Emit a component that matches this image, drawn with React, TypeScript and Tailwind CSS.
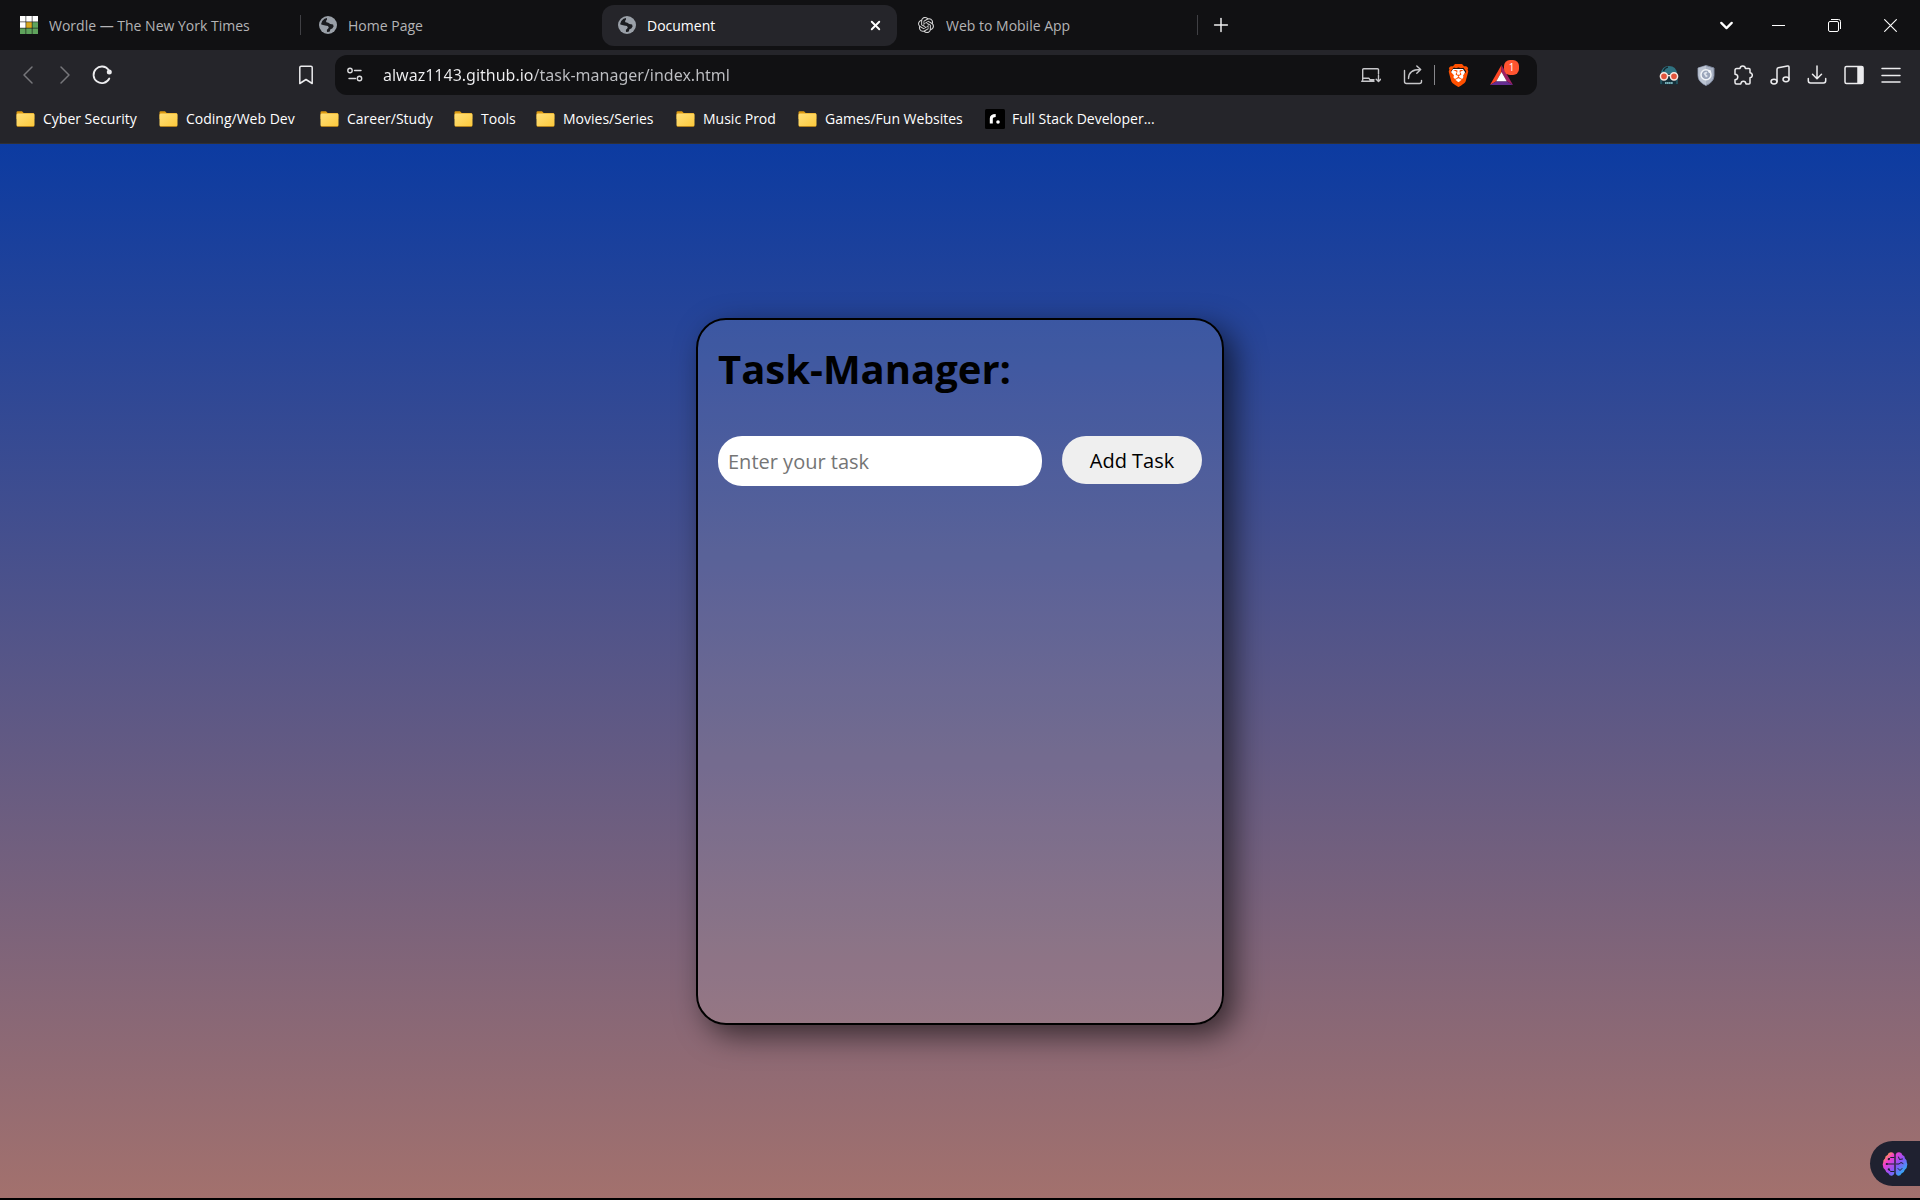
import React from "react";
import { SiBrave, SiOpenai } from "react-icons/si";
import { X, Plus, ChevronDown } from "lucide-react";

function WordleIcon() {
  const cells = [
    "#ffffff", "#ffffff", "#ffffff",
    "#ffffff", "#d9a81f", "#5fa35c",
    "#5fa35c", "#5fa35c", "#5fa35c",
  ];
  return (
    <svg width="18" height="18" viewBox="0 0 18 18" aria-hidden="true">
      <rect width="18" height="18" fill="#111" />
      {cells.map((c, i) => (
        <rect key={i} x={(i % 3) * 6.2} y={Math.floor(i / 3) * 6.2} width="5.6" height="5.6" fill={c} />
      ))}
    </svg>
  );
}

function GlobeIcon() {
  return (
    <svg width="18" height="18" viewBox="0 0 18 18" aria-hidden="true">
      <circle cx="9" cy="9" r="9" fill="#9aa0a8" />
      <path d="M2 8.200 3.200 5 5.500 2.700 8 2v1.600L7 5l.4 1.200 2 .5 1.800 1.400 2.900.4.5 2-1.300 2.100-1.900.7-.6 2.200L8.900 16l-1.500-.3v-2l1.800-1.600-.6-1.300-2.300-.2L4.600 9.200Z" fill="#1b1c20" />
      <path d="M8.300 4.400 10 2.500l3.300 1.300 2 2.800-2.200.1-1.500-1.200Z" fill="#9aa0a8" />
      <path d="M4.700 9.200 9 9.900l.8 1.800-2 2.300.2 2.300-3.600-1.800-2-3.600Z" fill="#9aa0a8" />
    </svg>
  );
}

function Folder() {
  return (
    <svg width="19" height="16" viewBox="0 0 19 16" aria-hidden="true">
      <defs>
        <linearGradient id="folder" x1="0" y1="0" x2="1" y2="1">
          <stop offset="0" stopColor="#ffe07a" />
          <stop offset="1" stopColor="#fcc93c" />
        </linearGradient>
      </defs>
      <path d="M.5 1.500Q.5.3 1.700.3H6l1.700 1.700H17q1.200 0 1.200 1.200V8H.5Z" fill="#dd9a10" />
      <path d="M.5 4Q.5 2.500 1.700 2.500H17.300q1.200 0 1.200 1.200V14q0 1.300-1.200 1.300H1.700Q.5 15.300.5 14Z" fill="url(#folder)" />
      <path d="M.7 14.900q.3.600 1 .6h15.600q.7 0 1-.6" fill="none" stroke="#c98d17" strokeWidth=".8" />
    </svg>
  );
}

function RoadmapIcon() {
  return (
    <svg width="20" height="20" viewBox="0 0 20 20" aria-hidden="true">
      <rect width="20" height="20" rx="1.500" fill="#000" />
      <path d="M6.300 14.500V9.500q0-3 4.400-3" fill="none" stroke="#fff" strokeWidth="3" />
      <circle cx="13" cy="13" r="1.800" fill="#fff" />
    </svg>
  );
}

type LineProps = { size?: number; width?: number; className?: string; children: React.ReactNode };
function Line({ size = 20, width = 1.5, className = "", children }: LineProps) {
  return (
    <svg
      width={size}
      height={size}
      viewBox="0 0 20 20"
      fill="none"
      stroke="currentColor"
      strokeWidth={width}
      strokeLinecap="round"
      strokeLinejoin="round"
      className={className}
      aria-hidden="true"
    >
      {children}
    </svg>
  );
}

function BatTriangle() {
  return (
    <svg width="23" height="20" viewBox="0 0 23 20" aria-hidden="true">
      <path d="M11.500 0 0 20l6.300-3.700 5.200-9.200Z" fill="#ff4724" />
      <path d="M11.500 0 23 20l-6.300-3.700-5.200-9.200Z" fill="#9e1f63" />
      <path d="M0 20h23l-6.300-3.700H6.300Z" fill="#662d91" />
      <path d="m11.500 7.100 5.200 9.200H6.300Z" fill="#fff" />
    </svg>
  );
}

function RobotIcon() {
  return (
    <svg width="20" height="20" viewBox="0 0 20 20" aria-hidden="true">
      <path d="M2 9Q2.500 1 10 1t8 8Z" fill="#2f7280" />
      <path d="M4.500 6Q6 2.600 9 2.200" fill="none" stroke="#14252c" strokeWidth="1.300" />
      <path d="M1.500 11h17v8.500h-17Z" fill="#15303a" />
      <path d="M2 14v5M18 14v5" stroke="#2f7280" strokeWidth="1" />
      <circle cx="5" cy="11.300" r="3.600" fill="#e2553c" stroke="#f7e9e2" strokeWidth="1.500" />
      <circle cx="15" cy="11.300" r="3.600" fill="#e2553c" stroke="#f7e9e2" strokeWidth="1.500" />
      <path d="M8.300 10.500h3.400" stroke="#f7e9e2" strokeWidth="1.400" />
      <path d="M6.300 18h7.400" stroke="#9fe3ea" strokeWidth="2" strokeDasharray="1.200 .8" />
    </svg>
  );
}

function ShieldIcon() {
  return (
    <svg width="18" height="21" viewBox="0 0 18 21" aria-hidden="true">
      <path d="M9 .5 17 3v7.500q0 6.500-8 10-8-3.500-8-10V3Z" fill="#a9b2c3" stroke="#7e889d" strokeWidth="1" />
      <path d="M9 .8 1.300 3v7.500q0 6.300 7.700 9.700Z" fill="#bcc4d2" />
      <circle cx="9" cy="9.700" r="5" fill="#9aa5ba" stroke="#f1f4f8" strokeWidth="1.500" />
      <path d="M6.500 8.500Q8 6 10.500 7L9 9.500l2 1.500-2 1.500Z" fill="#dde3ec" />
      <circle cx="12.600" cy="6.500" r="1.400" fill="#f1f4f8" />
    </svg>
  );
}

function BrainIcon() {
  return (
    <svg width="26" height="26" viewBox="0 0 26 26" aria-hidden="true">
      <defs>
        <linearGradient id="brain" gradientUnits="userSpaceOnUse" x1="3" y1="3" x2="23" y2="22">
          <stop offset="0" stopColor="#ffb02e" />
          <stop offset=".25" stopColor="#f43bd0" />
          <stop offset=".6" stopColor="#8a55f7" />
          <stop offset="1" stopColor="#22b8f5" />
        </linearGradient>
      </defs>
      <path
        d="M12.300 3.500Q11.500 1 8.800 1.300 6.200 1.600 5.600 4 3 4.800 3 7.600.9 9 1.200 11.500.2 13 1 15q-.1 2.900 2.300 4 .6 3 3.200 3.500Q7.500 25 10 24.700q2-.4 2.300-2.400ZM13.700 3.500q.8-2.500 3.500-2.200 2.600.3 3.200 2.700 2.600.8 2.600 3.600 2.100 1.400 1.800 3.900 1 1.500.2 3.500.1 2.900-2.300 4-.6 3-3.200 3.500-1 2.500-3.500 2.200-2-.4-2.300-2.400Z"
        fill="url(#brain)"
      />
      <g fill="none" stroke="#1f2130" strokeWidth="1" strokeLinecap="round">
        <path d="M12 6.500H8.500L7 8M12 13H5M12 20.500H8.500L7 18.500M16.500 6l1 2.500 3-.5M14.500 13h2.500l2-1.500 2 1M16 17.500l2 2 2-2" />
      </g>
      <g fill="#1f2130">
        <circle cx="6.800" cy="8.200" r="1.100" />
        <circle cx="4.800" cy="13" r="1.100" />
        <circle cx="6.800" cy="18.300" r="1.100" />
      </g>
    </svg>
  );
}

type TabProps = { icon: React.ReactNode; title: string; active?: boolean; divider?: boolean };
function Tab({ icon, title, active, divider }: TabProps) {
  if (active) {
    return (
      <div className="flex w-[299px] items-center px-0.5">
        <div className="flex h-[41px] flex-1 items-center gap-[11px] rounded-xl bg-[#25252a] pr-3 pl-4">
          {icon}
          <span className="flex-1 truncate pt-0.5 text-white">{title}</span>
          <button type="button" aria-label="Close tab" className="flex size-5 items-center justify-center text-white">
            <X size={15} strokeWidth={3} />
          </button>
        </div>
      </div>
    );
  }
  return (
    <div className="flex w-[299px] items-center gap-[11px] pl-[18px]">
      {icon}
      <span className="flex-1 truncate pt-0.5 text-[#b4b4b6]">{title}</span>
      {divider && <span className="h-5 w-px bg-[#404044]" />}
    </div>
  );
}

const tool = "flex w-[37px] items-center justify-center text-[#ececee]";
const dimTool = "flex w-[37px] items-center justify-center text-[#77777b]";
const barTool = "flex w-[42px] items-center justify-center text-[#c6c6c9]";

const bookmarks = [
  { label: "Cyber Security", size: "min-w-[143px]" },
  { label: "Coding/Web Dev", size: "min-w-[161px]" },
  { label: "Career/Study", size: "min-w-[134px]" },
  { label: "Tools", size: "min-w-[82px]" },
  { label: "Movies/Series", size: "min-w-[140px]" },
  { label: "Music Prod", size: "min-w-[122px]" },
  { label: "Games/Fun Websites", size: "min-w-[187px]" },
];

export default function App() {
  return (
    <div className="flex min-h-screen flex-col bg-black font-['Open_Sans',sans-serif] text-sm">
      <header>
        <div className="flex h-[50px] bg-[#111113] pl-0.5">
          <Tab icon={<WordleIcon />} title="Wordle — The New York Times" divider />
          <Tab icon={<GlobeIcon />} title="Home Page" />
          <Tab icon={<GlobeIcon />} title="Document" active />
          <Tab icon={<SiOpenai size={16} className="mx-px text-[#d4d4d4]" />} title="Web to Mobile App" divider />
          <button type="button" aria-label="New tab" className="flex w-[46px] items-center justify-center text-[#f0f0f0]">
            <Plus size={22} strokeWidth={1.6} />
          </button>
          <div className="ml-auto flex pr-0.5 text-white">
            <button type="button" aria-label="Search tabs" className="flex w-12 items-center justify-center">
              <ChevronDown size={21} strokeWidth={2.6} />
            </button>
            <button type="button" aria-label="Minimize" className="flex w-14 items-center justify-center">
              <svg width="13" height="13" viewBox="0 0 13 13" aria-hidden="true">
                <rect y="6" width="13" height="1" fill="currentColor" />
              </svg>
            </button>
            <button type="button" aria-label="Restore" className="flex w-14 items-center justify-center">
              <svg width="13" height="13" viewBox="0 0 13 13" fill="none" stroke="currentColor" aria-hidden="true">
                <rect x=".5" y="2.500" width="10" height="10" rx="1.500" />
                <path d="M3 .5h7.500a2 2 0 0 1 2 2V10" />
              </svg>
            </button>
            <button type="button" aria-label="Close" className="flex w-14 items-center justify-center">
              <svg width="13" height="13" viewBox="0 0 13 13" stroke="currentColor" strokeWidth="1.100" aria-hidden="true">
                <path d="m.3.3 12.400 12.400M12.700.3.3 12.700" />
              </svg>
            </button>
          </div>
        </div>

        <div className="flex h-[50px] items-center bg-[#25252a]">
          <div className="flex w-[335px] items-center pr-[19px] pl-[9px]">
            <button type="button" aria-label="Back" className={dimTool}>
              <Line><path d="M14 2 6 10l8 8" /></Line>
            </button>
            <button type="button" aria-label="Forward" className={dimTool}>
              <Line><path d="m6 2 8 8-8 8" /></Line>
            </button>
            <button type="button" aria-label="Reload" className={tool}>
              <Line width={1.8}>
                <path d="M17.300 13.500A8.300 8.300 0 1 1 16.500 4.800" />
                <circle cx="17.300" cy="7" r="1.600" fill="currentColor" />
              </Line>
            </button>
            <button type="button" aria-label="Bookmark this page" className="ml-auto flex w-5 justify-center text-[#ececee]">
              <Line><path d="M3.800 2.500q0-1.300 1.300-1.300h9.800q1.300 0 1.300 1.300v16L10 14.500l-6.200 4Z" /></Line>
            </button>
          </div>
          <div className="flex h-10 flex-1 items-center rounded-xl bg-[#111113] pr-4 pl-2.5">
            <button type="button" aria-label="Site information" className="mr-[18px] text-[#dcdcde]">
              <Line width={1.4}>
                <circle cx="5" cy="5.500" r="2.200" />
                <path d="M9.500 5.500H16M4 13.500h6.500" />
                <circle cx="14.500" cy="13.500" r="2.200" />
              </Line>
            </button>
            <input
              aria-label="Address"
              type="text"
              defaultValue="alwaz1143.github.io/task-manager/index.html"
              className="min-w-0 flex-1 bg-linear-to-r from-[#f0f0f2] from-[150px] to-[#bfc0c4] to-[151px] bg-clip-text font-['Noto_Sans',sans-serif] text-base text-transparent caret-white outline-none"
            />
            <button type="button" aria-label="Install app" className={barTool}>
              <Line width={1.4}>
                <path d="M17.500 9V4.700q0-1-1-1H2.700q-1 0-1 1V15M.7 16.300H13M1.700 13.300H8l1 1.500h4M17.500 10.500v5.800m-2.300-2 2.300 2.300 2.200-2.300" />
              </Line>
            </button>
            <button type="button" aria-label="Share" className={barTool}>
              <Line width={1.4}>
                <path d="M1.500 5.500v11q0 2 2 2h13q2 0 2-2V15.500M5.500 13.500q0-9 12-9M13.800 1l3.900 3.500-3.900 3.800" />
              </Line>
            </button>
            <span className="h-5 w-px bg-[#87878b]" />
            <button type="button" aria-label="Brave Shields" className="flex w-[46px] items-center justify-center">
              <span className="grid place-items-center">
                <svg width="14" height="16" viewBox="0 0 14 16" className="col-start-1 row-start-1" aria-hidden="true">
                  <path d="M2 2h10l2 3-2 8-5 3-5-3L0 5Z" fill="#fff" />
                </svg>
                <SiBrave size={23} className="col-start-1 row-start-1 text-[#ff5000]" />
              </span>
            </button>
            <button type="button" aria-label="Brave Rewards" className="relative flex w-10 items-center justify-center">
              <BatTriangle />
              <span className="absolute -top-[5px] left-[23px] flex size-[15px] items-center justify-center rounded-md bg-[#ff5430] text-[10px] text-white">
                1
              </span>
            </button>
          </div>
          <div className="flex w-[383px] justify-end pr-[11px]">
            <button type="button" aria-label="Robot extension" className={tool}><RobotIcon /></button>
            <button type="button" aria-label="Privacy extension" className={tool}><ShieldIcon /></button>
            <button type="button" aria-label="Extensions" className={tool}>
              <Line>
                <path d="M3.800 3.500H7q.3-2.400 2.700-2.400t2.700 2.400H16q1 0 1 1v3.300q2.300.3 2.300 2.500T17 12.800V18q0 1-1 1h-3q-.3-2.800-2.600-2.800T7.800 19H3.500q-1.500 0-1.500-1.500V14.800Q4.800 14.400 4.800 12T2 9.300V5.300q0-1.800 1.800-1.800Z" />
              </Line>
            </button>
            <button type="button" aria-label="Media controls" className={tool}>
              <Line>
                <ellipse cx="4" cy="16.600" rx="3" ry="2.400" />
                <ellipse cx="16" cy="14.300" rx="3" ry="2.400" />
                <path d="M7 16.500V4.500Q7 3 8.300 2.700L17.500 1q1.500-.2 1.500 1.200v12" />
              </Line>
            </button>
            <button type="button" aria-label="Downloads" className={tool}>
              <Line><path d="M10 1v12.500M5.500 9.300l4.500 4.500 4.500-4.500M1.300 13.500v2.300q0 2.200 2.200 2.200h13q2.200 0 2.200-2.200v-2.300" /></Line>
            </button>
            <button type="button" aria-label="Side panel" className={tool}>
              <Line>
                <rect x="1" y="1.500" width="18" height="17" rx="1.500" />
                <path d="M14 2h4.500v16H14Z" fill="currentColor" />
              </Line>
            </button>
            <button type="button" aria-label="Menu" className={tool}>
              <Line><path d="M1 3.500h18M1 10.500h18M1 17h18" /></Line>
            </button>
          </div>
        </div>

        <nav aria-label="Bookmarks" className="flex h-11 items-center border-b border-[#303034] bg-[#25252a] pb-1.5 pl-4 text-white">
          {bookmarks.map((b) => (
            <a key={b.label} href="#" className={`flex items-center gap-2 whitespace-nowrap ${b.size}`}>
              <Folder />
              {b.label}
            </a>
          ))}
          <a href="#" className="flex items-center gap-[7px] whitespace-nowrap">
            <RoadmapIcon />
            Full Stack Developer...
          </a>
        </nav>
      </header>

      <main className="relative flex flex-1 items-center justify-center border-b-2 border-black bg-linear-to-b/srgb from-[#0c3ba1] to-[#a3716d]">
        <section className="min-h-[707px] w-full max-w-[528px] rounded-[30px] border-2 border-black bg-white/10 px-5 pt-[22px] text-black shadow-[10px_10px_30px_rgba(0,0,0,0.6)]">
          <h1 className="text-[40px] leading-[54px] font-bold">Task-Manager:</h1>
          <form className="mt-[40px] flex items-start gap-5" onSubmit={(e) => e.preventDefault()}>
            <input
              type="text"
              aria-label="Task"
              placeholder="Enter your task"
              className="h-[50px] min-w-0 flex-1 rounded-3xl bg-white px-2.5 pt-0.5 text-xl placeholder-[#757575] outline-none"
            />
            <button type="submit" className="h-12 w-[140px] rounded-3xl bg-[#efefef] pt-0.5 text-xl">
              Add Task
            </button>
          </form>
        </section>
        <button
          type="button"
          aria-label="Assistant"
          className="absolute right-0 bottom-3 flex h-[45px] w-[50px] items-center justify-center rounded-l-full bg-[#1f2130]"
        >
          <BrainIcon />
        </button>
      </main>
    </div>
  );
}
